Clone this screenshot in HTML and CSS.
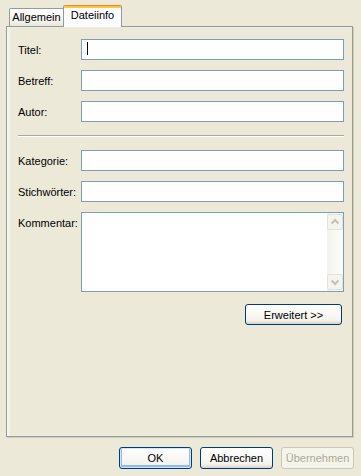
FILE: index.html
```html
<!DOCTYPE html>
<html>
<head>
  <meta charset="utf-8">
  <title>Eigenschaften</title>
  <link rel="stylesheet" href="styles.css">
</head>
<body>
<div class="dialog">
  <div class="tabs">
    <div class="tab">Allgemein</div>
    <div class="tab active">Dateiinfo</div>
  </div>

  <div class="panel">
    <div class="row">
      <label>Titel:</label>
      <div class="field"><span class="caret"></span></div>
    </div>
    <div class="row">
      <label>Betreff:</label>
      <div class="field"></div>
    </div>
    <div class="row">
      <label>Autor:</label>
      <div class="field"></div>
    </div>

    <div class="sep"></div>

    <div class="row">
      <label>Kategorie:</label>
      <div class="field"></div>
    </div>
    <div class="row">
      <label>Stichwörter:</label>
      <div class="field"></div>
    </div>
    <div class="row memo-row">
      <label>Kommentar:</label>
      <div class="memo">
        <div class="scrollbar">
          <div class="sb-btn">
            <svg width="14" height="14" viewBox="0 0 14 14"><path d="M3.5 8.5 L7 5 L10.5 8.5" fill="none" stroke="#c3c1b4" stroke-width="2"/></svg>
          </div>
          <div class="sb-track"></div>
          <div class="sb-btn">
            <svg width="14" height="14" viewBox="0 0 14 14"><path d="M3.5 5.5 L7 9 L10.5 5.5" fill="none" stroke="#c3c1b4" stroke-width="2"/></svg>
          </div>
        </div>
      </div>
    </div>

    <div class="more">
      <button class="btn wide">Erweitert &gt;&gt;</button>
    </div>
  </div>

  <div class="buttons">
    <button class="btn default">OK</button>
    <button class="btn">Abbrechen</button>
    <button class="btn" disabled>Übernehmen</button>
  </div>
</div>
</body>
</html>
```

FILE: styles.css
```css
body {
  margin: 0;
  background-color: #ece9d8;
  font-family: "Liberation Sans", Arial, sans-serif;
  font-size: 11px;
  color: #000;
}
.dialog {
  width: 361px;
  height: 476px;
}

/* tab strip */
.tabs {
  display: flex;
  align-items: flex-end;
  height: 26px;
  padding-left: 9px;
}
.tab {
  box-sizing: border-box;
  width: 55px;
  height: 18px;
  line-height: 17px;
  text-align: center;
  border: 1px solid #919b9c;
  border-bottom: none;
  border-radius: 2px 2px 0 0;
  background: linear-gradient(#ffffff, #f3f2ec 70%, #e9e7dd);
}
.tab.active {
  position: relative;
  z-index: 1;
  width: 59px;
  height: 22px;
  margin-left: -1px;
  margin-bottom: -1px;
  padding-top: 2px;
  padding-bottom: 4px;
  line-height: 15px;
  border-top: 1px solid #e68b2c;
  box-shadow: inset 0 2px 0 #ffc73c;
  background: #fcfcfe;
}

/* page */
.panel {
  box-sizing: border-box;
  width: 347px;
  height: 411px;
  margin-left: 6px;
  padding: 12px 8px 0 11px;
  border: 1px solid #919b9c;
  background-color: #ece9d8;
  box-shadow: 1px 1px 0 #d0cdbd, inset 3px 0 3px -1px #fbfaf5;
}
.row {
  display: flex;
  margin-bottom: 10px;
}
.row label {
  width: 63px;
  height: 21px;
  line-height: 20px;
  padding-top: 1px;
  box-sizing: border-box;
  white-space: nowrap;
}
.field {
  box-sizing: border-box;
  flex: 1;
  display: flex;
  height: 21px;
  border: 1px solid #7f9db9;
  background-color: #fff;
}
.caret {
  width: 1px;
  height: 13px;
  margin: 2px 0 0 5px;
  background-color: #000;
}
.sep {
  margin: 13px 0 13px;
  border-top: 1px solid #aca899;
  border-bottom: 1px solid #fff;
}

.memo-row {
  margin-bottom: 12px;
}
.memo {
  box-sizing: border-box;
  flex: 1;
  display: flex;
  justify-content: flex-end;
  height: 80px;
  border: 1px solid #7f9db9;
  background-color: #fff;
}
.scrollbar {
  display: flex;
  flex-direction: column;
  width: 16px;
  padding: 1px 0;
  background: linear-gradient(to right, #f3f3ee, #fdfdfa);
}
.sb-btn {
  box-sizing: border-box;
  display: flex;
  align-items: center;
  justify-content: center;
  height: 16px;
  border: 1px solid #e4e2d7;
  border-radius: 2px;
  background-color: #f5f4ee;
}
.sb-track {
  flex: 1;
}

/* buttons */
.more {
  display: flex;
  justify-content: flex-end;
  padding-right: 2px;
}
.btn {
  box-sizing: border-box;
  width: 73px;
  height: 22px;
  padding: 0;
  border: 1px solid #003c74;
  border-radius: 3px;
  background: linear-gradient(#ffffff, #f4f3ee 80%, #d8d3c6);
  font-family: inherit;
  font-size: 11px;
  color: #000;
}
.btn.wide {
  width: 97px;
  height: 21px;
}
.btn.default {
  box-shadow: inset 0 0 0 1px #cee7ff, inset 0 -1px 0 2px #98b8ea;
}
.btn:disabled {
  border-color: #c9c7ba;
  background: #f5f4ea;
  color: #aca899;
}
.buttons {
  display: flex;
  justify-content: flex-end;
  gap: 8px;
  margin-top: 10px;
  padding-right: 7px;
}
```
